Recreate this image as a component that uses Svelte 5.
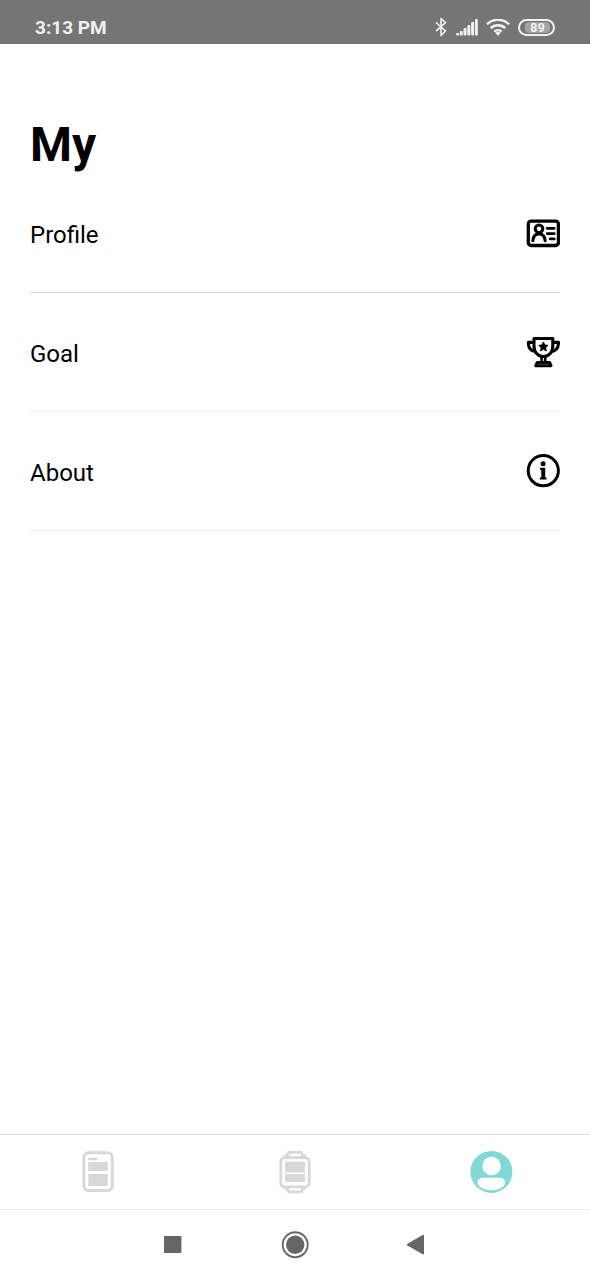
<script>
  let active = $state('my');
  const rows = [
    { id: 'profile', label: 'Profile' },
    { id: 'goal', label: 'Goal' },
    { id: 'about', label: 'About' }
  ];
</script>

<div class="screen">
  <header class="status">
    <time>3:13 PM</time>
    <div class="indicators">
      <svg width="14" height="20" viewBox="0 0 14 20" fill="none" stroke="#f2f2f2" stroke-width="1.6" aria-hidden="true">
        <path d="m3 5.500 9.500 8.500L8 18.500v-17l4.500 4.200L3 14.200" stroke-linejoin="round" />
      </svg>
      <svg class="signal" width="23" height="17" viewBox="0 0 23 17" fill="#f2f2f2" aria-hidden="true">
        <rect x="1" y="14" width="3" height="2.500" rx="1" />
        <rect x="4.700" y="12" width="3" height="4.500" rx="1" />
        <rect x="8.500" y="9" width="3" height="7.500" rx="1" />
        <rect x="12.300" y="6" width="3" height="10.500" rx="1" />
        <rect x="16.100" y="3" width="3" height="13.500" rx="1" />
        <rect x="20" y="0" width="2.800" height="16.500" rx="1" />
      </svg>
      <svg class="wifi" width="24" height="17" viewBox="0 0 24 17" fill="none" stroke="#f2f2f2" stroke-width="2.500" aria-hidden="true">
        <path d="M1 5.300a15.800 15.800 0 0 1 22 0M4.700 9.100a10.600 10.600 0 0 1 14.600 0M8.300 12.600a5.600 5.600 0 0 1 7.400 0" />
        <path d="M9.200 14a4 4 0 0 1 5.600 0L12 16.800z" fill="#f2f2f2" stroke="none" />
      </svg>
      <span class="battery"><span class="level">89</span></span>
    </div>
  </header>

  <main>
    <h1>My</h1>
    <ul>
      {#each rows as row (row.id)}
        <li class={row.id}>
          <button type="button" class="row">
            <span class="label">{row.label}</span>
            {#if row.id === 'profile'}
              <svg width="34" height="34" viewBox="0 0 34 34" fill="none" stroke="#000" stroke-linecap="round" aria-hidden="true">
                <rect x="2.300" y="5.100" width="30.100" height="24.400" rx="2.800" stroke-width="3.300" />
                <circle cx="13" cy="12.800" r="3.800" stroke-width="3.100" />
                <path d="M6.900 24.600c.3-4.300 2.600-6.600 6.100-6.600s5.800 2.300 6.100 6.600" stroke-width="3.100" />
                <path d="M21.200 12.300h7M21.200 17.600h7M24.200 22.900h4" stroke-width="2.800" />
              </svg>
            {:else if row.id === 'goal'}
              <svg width="34" height="34" viewBox="0 0 34 34" fill="none" stroke="#000" stroke-width="3.100" stroke-linejoin="round" aria-hidden="true">
                <path d="M8 3.500h18.800v7.500c0 6-3.800 10.500-9.400 10.500S8 17 8 11z" />
                <path d="M8 7.400H2.300c0 5.400 2.600 8.700 7.600 9.300M26.800 7.400h5.700c0 5.400-2.600 8.700-7.600 9.300" />
                <path d="M15.600 21.500v5.700M19.200 21.500v5.700" stroke-width="2.600" />
                <path d="M11.300 27.500h12.200l1.500 3.200H9.800z" />
                <path d="m17.400 7 1.400 3 3.200.4-2.400 2.200.7 3.300-2.900-1.600-2.900 1.600.7-3.300-2.400-2.200 3.200-.4z" fill="#000" stroke-width="1" />
              </svg>
            {:else}
              <svg width="34" height="34" viewBox="0 0 34 34" aria-hidden="true">
                <circle cx="17.300" cy="16.700" r="15.100" fill="none" stroke="#000" stroke-width="3" />
                <circle cx="17.100" cy="9.800" r="2.500" />
                <path d="M14.100 13.700h5.100v9.700h1.300v2.200h-6.600v-2.200h1.400v-7.500h-1.200z" />
              </svg>
            {/if}
          </button>
        </li>
      {/each}
    </ul>
  </main>

  <nav class="tabs" aria-label="Sections">
    <button type="button" aria-label="Journal" aria-pressed={active === 'journal'} onclick={() => (active = 'journal')}>
      <svg width="44" height="44" viewBox="0 0 44 44" fill="#d8d8d8" aria-hidden="true">
        <rect x="7.900" y="2.800" width="28.400" height="37.800" rx="4.500" fill="none" stroke="#d8d8d8" stroke-width="3" />
        <rect x="12.300" y="7.700" width="9" height="2.600" />
        <rect x="12.300" y="12" width="19.500" height="9" />
        <rect x="12.300" y="24" width="19.500" height="12" />
      </svg>
    </button>
    <button type="button" aria-label="Device" aria-pressed={active === 'device'} onclick={() => (active = 'device')}>
      <svg width="44" height="44" viewBox="0 0 44 44" fill="none" stroke="#d8d8d8" stroke-width="2.800" stroke-linejoin="round" aria-hidden="true">
        <rect x="7.800" y="7.500" width="28.400" height="29.400" rx="4" />
        <path d="M12.600 7.500V5.700h1.700l1.200-3.300h13l1.200 3.300h1.700v1.800M12.600 36.900v1.600h1.700l1.200 3.300h13l1.200-3.300h1.700v-1.600" />
        <path d="M12 11.600h20v10.800H12zM12 24.200h20v7.900H12z" fill="#d8d8d8" stroke="none" />
      </svg>
    </button>
    <button type="button" aria-label="My" aria-pressed={active === 'my'} onclick={() => (active = 'my')}>
      <svg width="44" height="44" viewBox="0 0 44 44" fill="#fff" aria-hidden="true">
        <circle cx="21.400" cy="21.900" r="21" fill="#80dad3" />
        <circle cx="21.600" cy="16" r="9.200" />
        <path d="M14.100 27.700h14.700c3.800 0 6.400 1.700 6.400 4.900 0 4.600-6.800 7.700-13.700 7.700S7.600 37.200 7.600 32.600c0-3.200 2.700-4.900 6.500-4.900z" />
      </svg>
    </button>
  </nav>

  <nav class="system" aria-label="System">
    <button type="button" aria-label="Recent apps">
      <svg width="28" height="28" viewBox="0 0 28 28" fill="#666" aria-hidden="true"><path d="M5 5h17.400v17H5z" /></svg>
    </button>
    <button type="button" aria-label="Home">
      <svg width="28" height="28" viewBox="0 0 28 28" fill="#666" aria-hidden="true">
        <circle cx="14.200" cy="13.700" r="12.500" fill="none" stroke="#666" stroke-width="1.900" />
        <circle cx="14.200" cy="13.700" r="9.200" />
      </svg>
    </button>
    <button type="button" aria-label="Back">
      <svg width="28" height="28" viewBox="0 0 28 28" fill="#666" aria-hidden="true"><path d="M21 4.200v18.900q-.8.700-1.800 0L4.400 14.600q-1.400-.9 0-1.800L19.200 4.200q1-.7 1.800 0z" /></svg>
    </button>
  </nav>
</div>

<style>
  .screen {
    display: flex;
    flex-direction: column;
    min-height: 100vh;
    background: #fff;
    color: #000;
    font-family: Roboto, sans-serif;
  }

  button {
    margin: 0;
    padding: 0;
    border: 0;
    background: none;
    color: inherit;
    font: inherit;
    cursor: pointer;
  }

  svg {
    display: block;
    flex: none;
  }

  .status {
    display: flex;
    align-items: center;
    justify-content: space-between;
    box-sizing: border-box;
    height: 44px;
    padding: 10px 35px 0;
    background: #757575;
    color: #f2f2f2;
  }

  time {
    font-size: 19px;
    font-weight: 700;
  }

  .indicators {
    display: flex;
    align-items: center;
    gap: 8px;
  }

  .battery {
    display: flex;
    box-sizing: border-box;
    width: 37px;
    height: 17px;
    padding: 1px 3px 1px 5px;
    border: 2px solid #f2f2f2;
    border-radius: 9px;
  }

  .level {
    flex: 1;
    border-radius: 4px;
    background: #a2a2a2;
    font-size: 13px;
    font-weight: 700;
    line-height: 12px;
    text-align: center;
  }

  main {
    flex: 1;
    padding: 72px 30px 0;
  }

  h1 {
    margin: 0;
    font-size: 48px;
    font-weight: 700;
    line-height: 58px;
  }

  ul {
    margin: 0;
    padding: 0;
    list-style: none;
  }

  li {
    border-bottom: 1px solid #eee;
  }

  .profile {
    border-bottom-color: #d9d9d9;
  }

  .row {
    display: flex;
    align-items: center;
    justify-content: space-between;
    width: 100%;
    height: 118px;
    font-size: 24px;
    line-height: 32px;
    text-align: left;
  }

  .label {
    padding-top: 3px;
  }

  .tabs {
    display: grid;
    grid-template-columns: repeat(3, 1fr);
    height: 74px;
    border-top: 1px solid #dcdcdc;
    border-bottom: 1px solid #eee;
  }

  .tabs button {
    display: grid;
    place-items: center;
  }

  .system {
    display: flex;
    align-items: center;
    justify-content: center;
    gap: 94px;
    height: 70px;
  }
</style>
